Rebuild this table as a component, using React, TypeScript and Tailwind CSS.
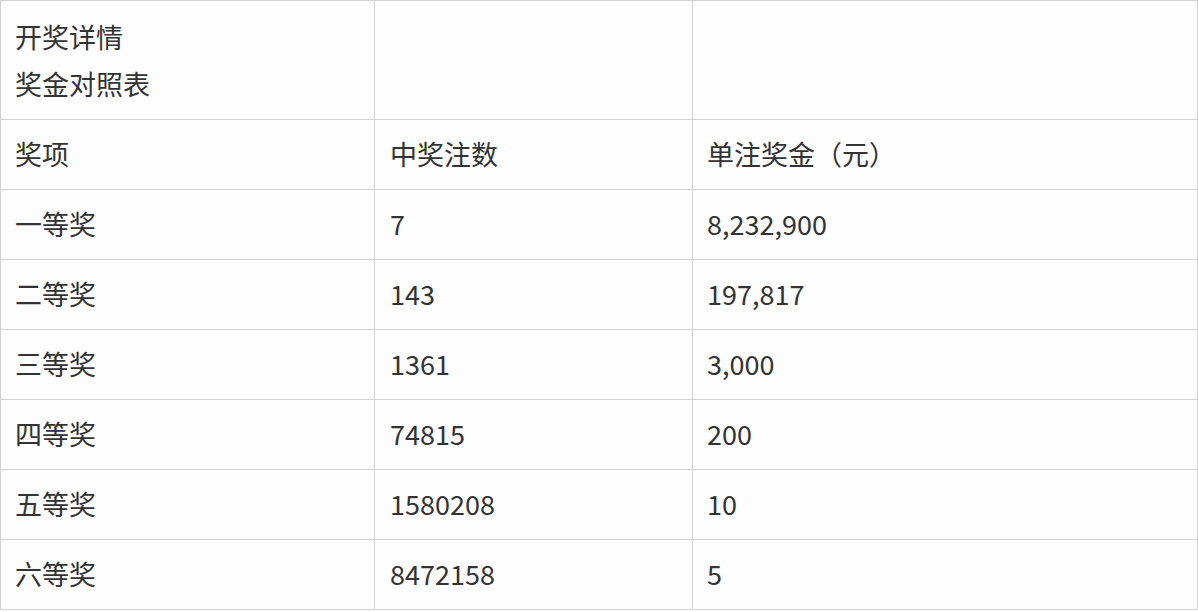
const rows = [
  ["一等奖", "7", "8,232,900"],
  ["二等奖", "143", "197,817"],
  ["三等奖", "1361", "3,000"],
  ["四等奖", "74815", "200"],
  ["五等奖", "1580208", "10"],
  ["六等奖", "8472158", "5"],
];

export default function App() {
  return (
    <div
      className="w-[1198px] h-[612px] bg-[#fdfdfe] text-[#333] text-[27px]"
      style={{ fontFamily: '"Noto Sans CJK SC", "Noto Sans", sans-serif' }}
    >
      <table className="border-collapse table-fixed w-[1197px]">
        <colgroup>
          <col className="w-[374px]" />
          <col className="w-[318px]" />
          <col className="w-[505px]" />
        </colgroup>
        <tbody>
          <tr className="h-[119px]">
            <td className="border border-[#d2d2d2] px-[14px] align-middle leading-[47px]">
              <div>开奖详情</div>
              <div>奖金对照表</div>
            </td>
            <td className="border border-[#d2d2d2]" />
            <td className="border border-[#d2d2d2]" />
          </tr>
          <tr className="h-[70px]">
            <td className="border border-[#d2d2d2] px-[14px]">奖项</td>
            <td className="border border-[#d2d2d2] px-[15px]">中奖注数</td>
            <td className="border border-[#d2d2d2] px-[14px]">单注奖金（元）</td>
          </tr>
          {rows.map(([name, count, prize]) => (
            <tr key={name} className="h-[70px]">
              <td className="border border-[#d2d2d2] px-[14px]">{name}</td>
              <td className="border border-[#d2d2d2] px-[15px]">{count}</td>
              <td className="border border-[#d2d2d2] px-[14px]">{prize}</td>
            </tr>
          ))}
        </tbody>
      </table>
    </div>
  );
}
